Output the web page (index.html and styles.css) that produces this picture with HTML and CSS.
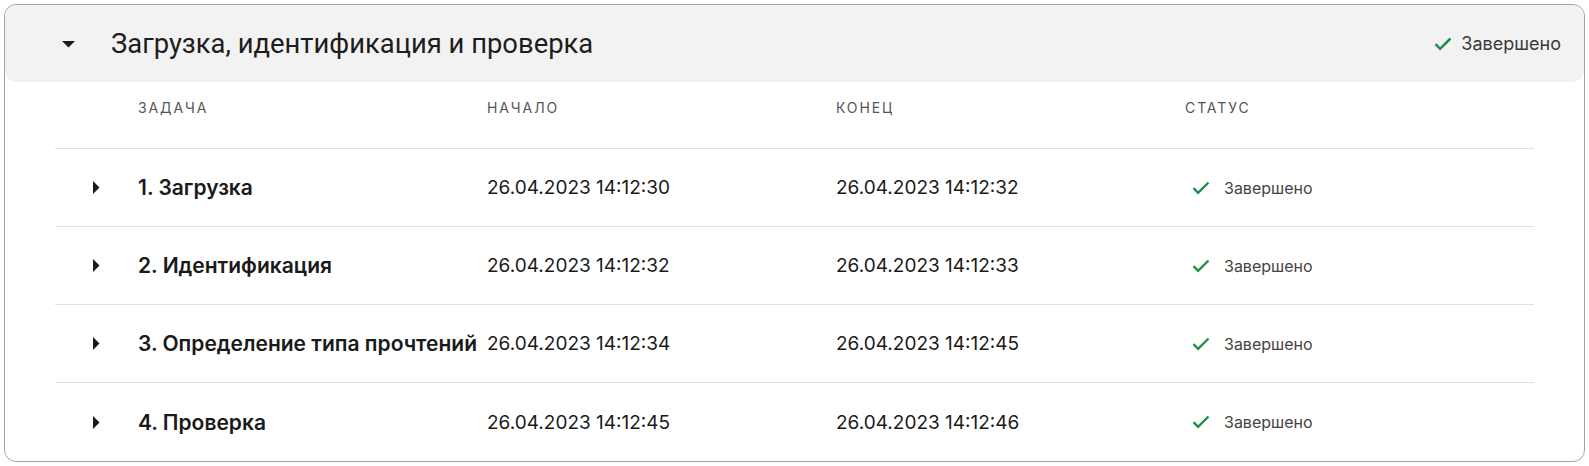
FILE: index.html
```html
<!DOCTYPE html>
<html lang="ru">
<head>
<meta charset="utf-8">
<link rel="stylesheet" href="styles.css">
</head>
<body>
<div class="card">
  <div class="head">
    <div class="head-left">
      <svg class="caret-down" width="13" height="8" viewBox="0 0 13 8"><path d="M0 1h13L6.5 7.5z" fill="#1a1a1a"/></svg>
      <span class="title">Загрузка, идентификация и проверка</span>
    </div>
    <div class="head-status">
      <svg width="18" height="14" viewBox="0 0 18 14"><path d="M1.5 7.2l4.6 4.6L16.5 1.5" fill="none" stroke="#1f8f4e" stroke-width="2.5"/></svg>
      <span>Завершено</span>
    </div>
  </div>
  <div class="table">
    <div class="row colhead">
      <div></div>
      <div>Задача</div>
      <div>Начало</div>
      <div>Конец</div>
      <div>Статус</div>
    </div>
    <div class="row item">
      <div class="arrow"><svg width="8" height="13" viewBox="0 0 8 13"><path d="M1 0v13l6.5-6.5z" fill="#1a1a1a"/></svg></div>
      <div class="name">1. Загрузка</div>
      <div class="date">26.04.2023 14:12:30</div>
      <div class="date">26.04.2023 14:12:32</div>
      <div class="status"><svg width="18" height="14" viewBox="0 0 18 14"><path d="M1.5 7.2l4.6 4.6L16.5 1.5" fill="none" stroke="#1f8f4e" stroke-width="2.4"/></svg><span>Завершено</span></div>
    </div>
    <div class="row item">
      <div class="arrow"><svg width="8" height="13" viewBox="0 0 8 13"><path d="M1 0v13l6.5-6.5z" fill="#1a1a1a"/></svg></div>
      <div class="name">2. Идентификация</div>
      <div class="date">26.04.2023 14:12:32</div>
      <div class="date">26.04.2023 14:12:33</div>
      <div class="status"><svg width="18" height="14" viewBox="0 0 18 14"><path d="M1.5 7.2l4.6 4.6L16.5 1.5" fill="none" stroke="#1f8f4e" stroke-width="2.4"/></svg><span>Завершено</span></div>
    </div>
    <div class="row item">
      <div class="arrow"><svg width="8" height="13" viewBox="0 0 8 13"><path d="M1 0v13l6.5-6.5z" fill="#1a1a1a"/></svg></div>
      <div class="name">3. Определение типа прочтений</div>
      <div class="date">26.04.2023 14:12:34</div>
      <div class="date">26.04.2023 14:12:45</div>
      <div class="status"><svg width="18" height="14" viewBox="0 0 18 14"><path d="M1.5 7.2l4.6 4.6L16.5 1.5" fill="none" stroke="#1f8f4e" stroke-width="2.4"/></svg><span>Завершено</span></div>
    </div>
    <div class="row item last">
      <div class="arrow"><svg width="8" height="13" viewBox="0 0 8 13"><path d="M1 0v13l6.5-6.5z" fill="#1a1a1a"/></svg></div>
      <div class="name">4. Проверка</div>
      <div class="date">26.04.2023 14:12:45</div>
      <div class="date">26.04.2023 14:12:46</div>
      <div class="status"><svg width="18" height="14" viewBox="0 0 18 14"><path d="M1.5 7.2l4.6 4.6L16.5 1.5" fill="none" stroke="#1f8f4e" stroke-width="2.4"/></svg><span>Завершено</span></div>
    </div>
  </div>
</div>
</body>
</html>
```

FILE: styles.css
```css
* { box-sizing: border-box; }
body {
  margin: 4px;
  background: #fff;
  font-family: Inter, "Noto Sans", sans-serif;
  color: #1a1a1a;
}
.card {
  border: 1px solid #a3a1b8;
  border-radius: 12px;
  height: 458px;
  overflow: hidden;
}
.head {
  background: #f2f2f2;
  border-radius: 12px;
  height: 77px;
  display: flex;
  align-items: center;
  justify-content: space-between;
  padding: 0 23px 0 57px;
}
.head-left {
  display: flex;
  align-items: center;
  gap: 36px;
}
.title {
  font-family: Roboto, sans-serif;
  font-size: 27.4px;
  color: #1d1d1d;
}
.head-status {
  display: flex;
  align-items: center;
  gap: 9px;
  font-size: 18px;
  color: #3a3a3a;
}
.table {
  margin: 0 50px 0 50px;
}
.row {
  display: grid;
  grid-template-columns: 83px repeat(4, 349px);
  align-items: center;
}
.colhead {
  height: 67px;
  font-size: 14px;
  letter-spacing: 1.9px;
  text-transform: uppercase;
  color: #555;
  padding-bottom: 16px;
  border-bottom: 1px solid #e0e0e0;
}
.item {
  height: 78px;
  border-bottom: 1px solid #e0e0e0;
}
.item.last { border-bottom: none; }
.arrow {
  padding-left: 37px;
  display: flex;
}
.name {
  font-size: 21px;
  font-weight: 600;
  white-space: nowrap;
}
.date {
  font-size: 19px;
}
.status {
  display: flex;
  align-items: center;
  gap: 14px;
  padding-left: 7px;
  font-size: 16px;
  color: #444;
}
```
